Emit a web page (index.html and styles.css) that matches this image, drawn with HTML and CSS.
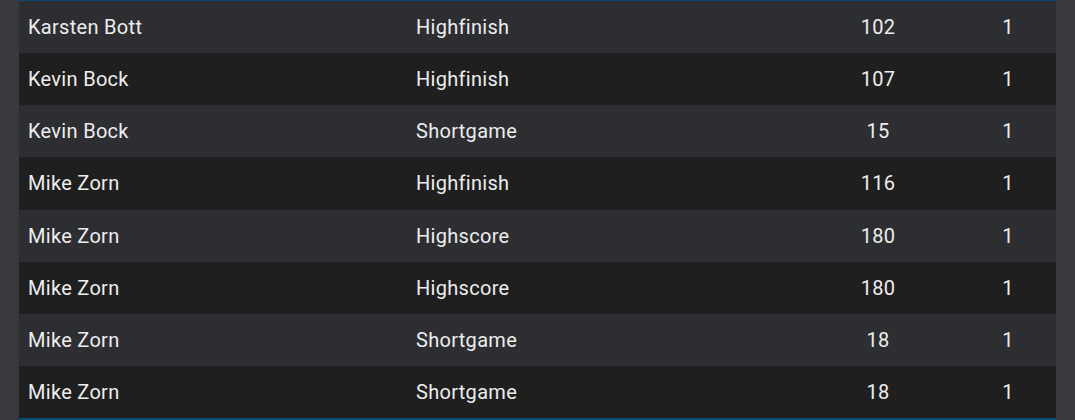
FILE: index.html
```html
<!DOCTYPE html>
<html lang="de">
<head>
<meta charset="utf-8">
<link rel="stylesheet" href="styles.css">
</head>
<body>
<div class="page">
  <div class="table">
    <div class="row odd"><div class="c name">Karsten Bott</div><div class="c type">Highfinish</div><div class="c num">102</div><div class="c cnt">1</div></div>
    <div class="row even"><div class="c name">Kevin Bock</div><div class="c type">Highfinish</div><div class="c num">107</div><div class="c cnt">1</div></div>
    <div class="row odd"><div class="c name">Kevin Bock</div><div class="c type">Shortgame</div><div class="c num">15</div><div class="c cnt">1</div></div>
    <div class="row even"><div class="c name">Mike Zorn</div><div class="c type">Highfinish</div><div class="c num">116</div><div class="c cnt">1</div></div>
    <div class="row odd"><div class="c name">Mike Zorn</div><div class="c type">Highscore</div><div class="c num">180</div><div class="c cnt">1</div></div>
    <div class="row even"><div class="c name">Mike Zorn</div><div class="c type">Highscore</div><div class="c num">180</div><div class="c cnt">1</div></div>
    <div class="row odd"><div class="c name">Mike Zorn</div><div class="c type">Shortgame</div><div class="c num">18</div><div class="c cnt">1</div></div>
    <div class="row even"><div class="c name">Mike Zorn</div><div class="c type">Shortgame</div><div class="c num">18</div><div class="c cnt">1</div></div>
  </div>
</div>
</body>
</html>
```

FILE: styles.css
```css
html, body {
  margin: 0;
  padding: 0;
  background: #38393d;
  height: 420px;
  overflow: hidden;
}
.page {
  padding: 0 19px;
  font-family: Roboto, "Liberation Sans", sans-serif;
  color: #ededed;
}
.table {
  border-top: 1px solid #0a4a73;
  border-bottom: 2px solid #0a4a73;
}
.row {
  display: grid;
  grid-template-columns: 388px 393px 156px 100px;
  height: 52.125px;
  align-items: center;
  font-size: 20px;
  letter-spacing: 0.3px;
}
.row.odd { background: #2d2e32; }
.row.even { background: #1f1f1f; }
.c { white-space: nowrap; }
.name, .type { padding-left: 9px; }
.num, .cnt { text-align: center; }
.cnt { padding-left: 4px; }
```
